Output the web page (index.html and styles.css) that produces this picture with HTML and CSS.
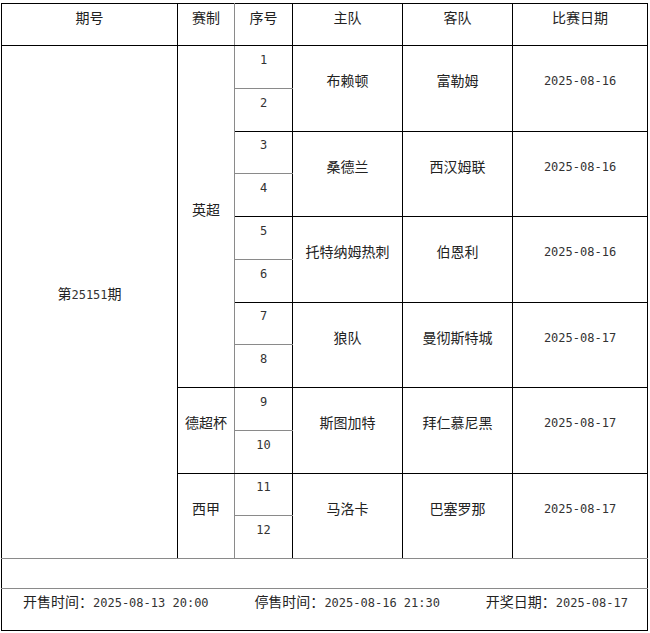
FILE: index.html
```html
<!DOCTYPE html>
<html lang="zh-CN">
<head>
<meta charset="utf-8">
<title>第25151期</title>
<link rel="stylesheet" href="styles.css">
</head>
<body>
<table class="sched">
  <colgroup>
    <col class="c-issue">
    <col class="c-league">
    <col class="c-seq">
    <col class="c-team">
    <col class="c-team">
    <col class="c-date">
  </colgroup>
  <thead>
    <tr class="head">
      <th>期号</th>
      <th class="league">赛制</th>
      <th>序号</th>
      <th>主队</th>
      <th>客队</th>
      <th>比赛日期</th>
    </tr>
  </thead>
  <tbody>
    <tr class="r">
      <td rowspan="12" class="last">第<span class="num">25151</span>期</td>
      <td rowspan="8" class="league">英超</td>
      <td class="seq top"><span class="num">1</span></td>
      <td rowspan="2">布赖顿</td>
      <td rowspan="2">富勒姆</td>
      <td rowspan="2"><span class="num">2025-08-16</span></td>
    </tr>
    <tr class="r"><td class="seq"><span class="num">2</span></td></tr>
    <tr class="r">
      <td class="seq top"><span class="num">3</span></td>
      <td rowspan="2">桑德兰</td>
      <td rowspan="2">西汉姆联</td>
      <td rowspan="2"><span class="num">2025-08-16</span></td>
    </tr>
    <tr class="r"><td class="seq"><span class="num">4</span></td></tr>
    <tr class="r">
      <td class="seq top"><span class="num">5</span></td>
      <td rowspan="2">托特纳姆热刺</td>
      <td rowspan="2">伯恩利</td>
      <td rowspan="2"><span class="num">2025-08-16</span></td>
    </tr>
    <tr class="r"><td class="seq"><span class="num">6</span></td></tr>
    <tr class="r">
      <td class="seq top"><span class="num">7</span></td>
      <td rowspan="2">狼队</td>
      <td rowspan="2">曼彻斯特城</td>
      <td rowspan="2"><span class="num">2025-08-17</span></td>
    </tr>
    <tr class="r"><td class="seq"><span class="num">8</span></td></tr>
    <tr class="r">
      <td rowspan="2" class="league">德超杯</td>
      <td class="seq top"><span class="num">9</span></td>
      <td rowspan="2">斯图加特</td>
      <td rowspan="2">拜仁慕尼黑</td>
      <td rowspan="2"><span class="num">2025-08-17</span></td>
    </tr>
    <tr class="r"><td class="seq"><span class="num">10</span></td></tr>
    <tr class="r">
      <td rowspan="2" class="league last">西甲</td>
      <td class="seq top"><span class="num">11</span></td>
      <td rowspan="2" class="last">马洛卡</td>
      <td rowspan="2" class="last">巴塞罗那</td>
      <td rowspan="2" class="last"><span class="num">2025-08-17</span></td>
    </tr>
    <tr class="r"><td class="seq last"><span class="num">12</span></td></tr>
    <tr class="blank"><td colspan="6" class="last"></td></tr>
    <tr class="foot">
      <td colspan="6">
        <div class="foot-row">
          <span>开售时间：<span class="num">2025-08-13 20:00</span></span>
          <span>停售时间：<span class="num">2025-08-16 21:30</span></span>
          <span>开奖日期：<span class="num">2025-08-17</span></span>
        </div>
      </td>
    </tr>
  </tbody>
</table>
</body>
</html>
```

FILE: styles.css
```css
html, body {
  background: #fff;
}
body {
  margin: 3px 0 0 1px;
  font-family: "Noto Sans CJK SC", "DejaVu Sans", sans-serif;
  font-size: 14px;
  color: #222;
}
.sched {
  border-collapse: collapse;
  table-layout: fixed;
  width: 646px;
}
.c-issue { width: 176px; }
.c-league { width: 57px; }
.c-seq { width: 58px; }
.c-team { width: 110px; }
.c-date { width: 135px; }

.sched th,
.sched td {
  border: 1px solid #000;
  padding: 0 0 16px 0;
  text-align: center;
  vertical-align: middle;
  font-weight: normal;
  line-height: 16px;
  white-space: nowrap;
}
.head { height: 42px; }
.r { height: 42.75px; }
.blank { height: 30px; }
.foot { height: 42px; }

.sched .league { border-right-color: #8a8a8a; }
.sched .seq.top { border-bottom-color: #8a8a8a; }
.sched .last { border-bottom-color: #8a8a8a; }
.sched .blank td { border-bottom-color: #8a8a8a; }

.num {
  font-family: "DejaVu Sans Mono", "Liberation Mono", monospace;
  font-size: 12px;
  color: #333;
}
.sched .foot td {
  padding: 0 19px 16px 21px;
  text-align: left;
}
.foot-row {
  display: flex;
  justify-content: space-between;
}
```
